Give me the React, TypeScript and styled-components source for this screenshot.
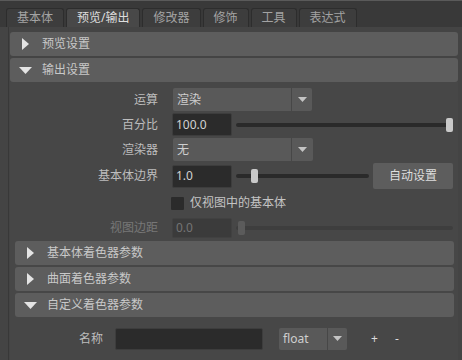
import React from 'react'
import styled, { createGlobalStyle } from 'styled-components'

const GlobalStyle = createGlobalStyle`
  body {
    margin: 0;
    background: #444444;
    font-family: "Noto Sans", "Noto Sans CJK SC", sans-serif;
    font-size: 12px;
  }
`

const Window = styled.div`
  width: 462px;
  height: 360px;
  overflow: hidden;
  background: #444444;
  display: flex;
  flex-direction: column;
`

const TabBar = styled.div`
  box-sizing: border-box;
  height: 27px;
  border-top: 1px solid #5a5a5a;
  background: #393939;
  padding: 7px 0 0 6px;
  display: flex;
  align-items: flex-end;
  gap: 2px;
`

const Tab = styled.div<{ $active?: boolean }>`
  height: 19px;
  box-sizing: border-box;
  padding: 0 10px;
  border: 1px solid #2d2d2d;
  border-bottom: none;
  border-radius: 3px 3px 0 0;
  background: ${p => (p.$active ? '#484848' : '#3d3d3d')};
  color: ${p => (p.$active ? '#dedede' : '#a3a3a3')};
  display: flex;
  align-items: center;
  line-height: 1;
`

const Panel = styled.div`
  flex: 1;
  margin-left: 8px;
  border-left: 1px solid #383838;
  padding: 5px 4px 0 1px;
  display: flex;
  flex-direction: column;
`

const Header = styled.div<{ $nested?: boolean; $open?: boolean }>`
  height: 24px;
  flex-shrink: 0;
  margin: 0 ${p => (p.$nested ? '0 0 5px' : '0')};
  margin-bottom: ${p => (p.$open ? '0' : '2px')};
  background: #5d5d5d;
  border-radius: 3px;
  display: flex;
  align-items: center;
  color: #c8c8c8;
  line-height: 1;
`

const Arrow = styled.span`
  width: 14px;
  margin-left: 8px;
  margin-right: 10px;
  display: flex;
  justify-content: center;
`

const Body = styled.div<{ $pad: string }>`
  background: #474747;
  padding: ${p => p.$pad};
  display: flex;
  flex-direction: column;
`

const Row = styled.div<{ $h: number }>`
  height: ${p => p.$h}px;
  display: flex;
  align-items: center;
  flex-shrink: 0;
`

const Label = styled.span<{ $w?: number; $disabled?: boolean }>`
  width: ${p => p.$w ?? 148}px;
  margin-right: ${p => (p.$w ? 12 : 14)}px;
  text-align: right;
  color: ${p => (p.$disabled ? '#777777' : '#bdbdbd')};
  line-height: 1;
`

const Combo = styled.div<{ $w: number }>`
  width: ${p => p.$w}px;
  height: 23px;
  display: flex;
  gap: 1px;
  margin-left: 1px;
`

const ComboText = styled.div`
  flex: 1;
  background: #595959;
  border-radius: 2px 0 0 2px;
  color: #cfcfcf;
  padding-left: 4px;
  display: flex;
  align-items: center;
  line-height: 1;
`

const ComboArrow = styled.div<{ $w: number }>`
  width: ${p => p.$w}px;
  background: #595959;
  border-radius: 0 2px 2px 0;
  display: flex;
  align-items: center;
  justify-content: center;
`

const Field = styled.div<{ $w: number; $h: number; $disabled?: boolean }>`
  box-sizing: border-box;
  width: ${p => p.$w}px;
  height: ${p => p.$h}px;
  background: ${p => (p.$disabled ? '#3b3b3b' : '#2b2b2b')};
  border: 1px solid ${p => (p.$disabled ? '#414141' : '#3d3d3d')};
  border-radius: 2px;
  color: ${p => (p.$disabled ? '#747474' : '#d2d2d2')};
  padding-left: 3px;
  display: flex;
  align-items: center;
  line-height: 1;
  flex-shrink: 0;
`

const SliderWrap = styled.div<{ $w: number }>`
  position: relative;
  width: ${p => p.$w}px;
  height: 14px;
  margin-left: 4px;
  display: flex;
  align-items: center;
`

const Track = styled.div<{ $disabled?: boolean }>`
  width: 100%;
  height: 4px;
  border-radius: 2px;
  background: ${p => (p.$disabled ? '#3e3e3e' : '#2a2a2a')};
`

const Handle = styled.div<{ $disabled?: boolean }>`
  position: absolute;
  top: 0;
  width: 7px;
  height: 14px;
  border-radius: 2px;
  background: ${p => (p.$disabled ? '#5b5b5b' : '#c9c9c9')};
`

const Button = styled.div`
  width: 80px;
  height: 26px;
  margin-left: 4px;
  background: #5d5d5d;
  border-radius: 2px;
  color: #dedede;
  display: flex;
  align-items: center;
  justify-content: center;
  line-height: 1;
`

const Check = styled.div`
  width: 13px;
  height: 13px;
  margin-left: 161px;
  background: #2b2b2b;
  border-radius: 1px;
`

const CheckLabel = styled.span`
  margin-left: 6px;
  color: #c4c4c4;
  line-height: 1;
`

const Sign = styled.span<{ $ml: number }>`
  margin-left: ${p => p.$ml}px;
  color: #dcdcdc;
  line-height: 1;
`

const DownTri = ({ w = 13, h = 7, c = '#e4e4e4' }) => (
  <svg width={w} height={h} viewBox={`0 0 ${w} ${h}`}>
    <polygon points={`0,0 ${w},0 ${w / 2},${h}`} fill={c} />
  </svg>
)

const RightTri = () => (
  <svg width={7} height={12} viewBox='0 0 7 12'>
    <polygon points='0,0 7,6 0,12' fill='#e4e4e4' />
  </svg>
)

function Section ({ title, open, nested }: { title: string; open?: boolean; nested?: boolean }) {
  return (
    <Header $open={open} $nested={nested}>
      <Arrow>{open ? <DownTri /> : <RightTri />}</Arrow>
      {title}
    </Header>
  )
}

function Slider ({ w, pos, disabled }: { w: number; pos: number; disabled?: boolean }) {
  return (
    <SliderWrap $w={w}>
      <Track $disabled={disabled} />
      <Handle $disabled={disabled} style={{ left: pos }} />
    </SliderWrap>
  )
}

const tabs = ['基本体', '预览/输出', '修改器', '修饰', '工具', '表达式']

export default function App () {
  return (
    <>
      <GlobalStyle />
      <Window>
        <TabBar>
          {tabs.map(t => (
            <Tab key={t} $active={t === '预览/输出'}>{t}</Tab>
          ))}
        </TabBar>
        <Panel>
          <Section title='预览设置' />
          <Section title='输出设置' open />
          <Body $pad='5px 4px 2px 0'>
            <Row $h={25}>
              <Label>运算</Label>
              <Combo $w={139}>
                <ComboText>渲染</ComboText>
                <ComboArrow $w={20}><DownTri w={9} h={5} c='#c4c4c4' /></ComboArrow>
              </Combo>
            </Row>
            <Row $h={25}>
              <Label>百分比</Label>
              <Field $w={60} $h={23}>100.0</Field>
              <Slider w={217} pos={210} />
            </Row>
            <Row $h={25}>
              <Label>渲染器</Label>
              <Combo $w={140}>
                <ComboText>无</ComboText>
                <ComboArrow $w={21}><DownTri w={9} h={5} c='#c4c4c4' /></ComboArrow>
              </Combo>
            </Row>
            <Row $h={28}>
              <Label>基本体边界</Label>
              <Field $w={60} $h={23}>1.0</Field>
              <Slider w={133} pos={15} />
              <Button>自动设置</Button>
            </Row>
            <Row $h={26}>
              <Check />
              <CheckLabel>仅视图中的基本体</CheckLabel>
            </Row>
            <Row $h={23}>
              <Label $disabled>视图边距</Label>
              <Field $w={60} $h={20} $disabled>0.0</Field>
              <Slider w={217} pos={2} disabled />
            </Row>
          </Body>
          <Body $pad='0 4px 0 0'>
            <Section title='基本体着色器参数' nested />
            <Section title='曲面着色器参数' nested />
            <Section title='自定义着色器参数' nested open />
            <Row $h={43}>
              <Label $w={93}>名称</Label>
              <Field $w={148} $h={22} />
              <Combo $w={68} style={{ marginLeft: 16, height: 22 }}>
                <ComboText>float</ComboText>
                <ComboArrow $w={19}><DownTri w={9} h={5} c='#c4c4c4' /></ComboArrow>
              </Combo>
              <Sign $ml={24}>+</Sign>
              <Sign $ml={17}>-</Sign>
            </Row>
          </Body>
        </Panel>
      </Window>
    </>
  )
}
